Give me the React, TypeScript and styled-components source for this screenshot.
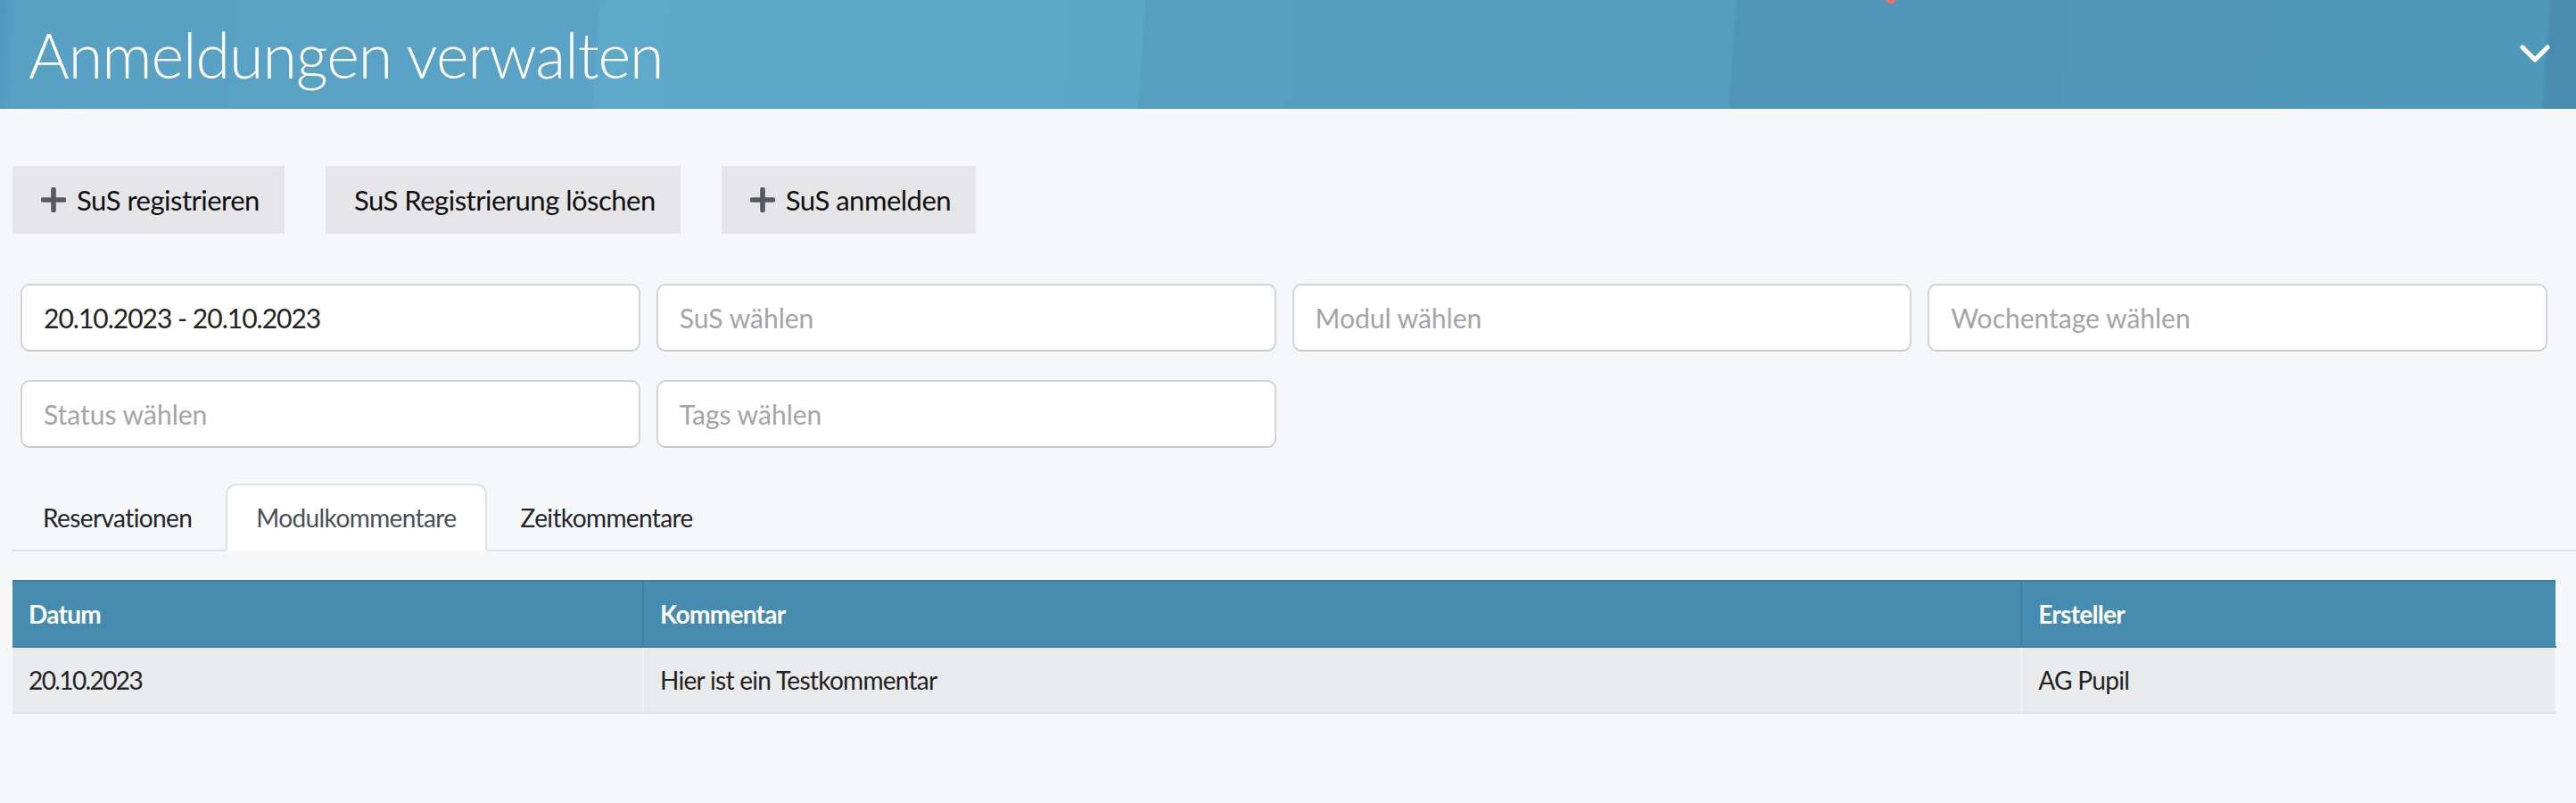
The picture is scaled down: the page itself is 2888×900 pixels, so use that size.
import React, { useState } from "react";
import styled, { createGlobalStyle } from "styled-components";

const GlobalStyle = createGlobalStyle`
  html {
    zoom: 2;
  }
  body {
    margin: 0;
    background: #f6f7f9;
    font-family: Lato, "Noto Sans", sans-serif;
    color: #212529;
  }
  * {
    box-sizing: border-box;
  }
`;

const StyledHeader = styled.header`
  position: relative;
  height: 61px;
  display: flex;
  align-items: center;
  justify-content: space-between;
  padding: 0 14px 0 16px;
  background-color: #58a1c4;
  background-image: linear-gradient(
    94deg,
    #4f98bd 0,
    #58a1c5 10px,
    #5aa3c6 335px,
    #5ea9cb 336px,
    #5ca7c9 640px,
    #569fc3 641px,
    #559dc1 970px,
    #4f95b8 972px,
    #5098bb 1425px,
    #4a8db1 1427px
  );
  overflow: hidden;
`;

const StyledTitle = styled.h1`
  margin: 0;
  color: white;
  font-family: Lato, "Noto Sans", sans-serif;
  font-weight: 300;
  font-size: 35px;
  letter-spacing: -0.5px;
`;

const StyledDot = styled.span`
  position: absolute;
  top: -6px;
  left: 1056px;
  width: 8px;
  height: 8px;
  border-radius: 50%;
  background: #e0707a;
`;

const StyledToggle = styled.button`
  display: flex;
  align-items: center;
  padding: 0;
  border: none;
  background: none;
  cursor: pointer;
`;

const StyledMain = styled.main`
  padding: 0 11px 40px 7px;
`;

const StyledButtonRow = styled.div`
  display: flex;
  gap: 23px;
  margin-top: 32px;
`;

const StyledButton = styled.button`
  display: flex;
  align-items: center;
  gap: 6px;
  height: 38px;
  padding: 0 14px 0 16px;
  border: none;
  background: #e6e6e8;
  color: #111;
  font-family: Lato, "Noto Sans", sans-serif;
  font-size: 15.5px;
  letter-spacing: -0.25px;
  cursor: pointer;
`;

const StyledFilters = styled.div`
  display: grid;
  grid-template-columns: repeat(4, 1fr);
  column-gap: 9px;
  row-gap: 16px;
  margin-top: 28px;
  padding: 0 5px 0 4.5px;
`;

const StyledInput = styled.input`
  height: 38px;
  width: 100%;
  padding: 0 12px;
  border: 1px solid #d0d4d9;
  border-bottom-color: #c6cacf;
  border-radius: 5px;
  background: white;
  font-family: Lato, "Noto Sans", sans-serif;
  font-size: 15px;
  letter-spacing: -0.5px;
  color: #222;
  outline: none;

  &::placeholder {
    color: #a4a4a6;
    letter-spacing: 0;
  }
`;

const StyledTabs = styled.div`
  display: flex;
  margin: 20px -11px 0 0;
  border-bottom: 1px solid #dee2e6;
`;

const StyledTab = styled.button<{ $active: boolean }>`
  margin: 0 2px -1px 0;
  padding: 8px 16px;
  border: 1px solid ${(p) => (p.$active ? "#dee2e6" : "transparent")};
  border-bottom-color: ${(p) => (p.$active ? "white" : "transparent")};
  border-radius: 6px 6px 0 0;
  background: ${(p) => (p.$active ? "white" : "transparent")};
  color: ${(p) => (p.$active ? "#495057" : "#212529")};
  font-family: Lato, "Noto Sans", sans-serif;
  font-size: 14px;
  letter-spacing: -0.3px;
  line-height: 20px;
  cursor: pointer;
`;

const StyledTable = styled.table`
  width: 100%;
  margin-top: 16px;
  border-collapse: collapse;
  font-size: 14px;
  letter-spacing: -0.35px;
`;

const StyledHeadCell = styled.th`
  height: 37px;
  padding: 0 9px;
  text-align: left;
  font-weight: 700;
  color: white;
  background: #468bb0;
  border-top: 1px solid #3f7fa2;
  border-left: 1px solid #3f7fa2;
  border-bottom: 1px solid #3f7fa2;

  &:first-child {
    border-left: none;
  }
`;

const StyledCell = styled.td<{ $numeric?: boolean }>`
  height: 37px;
  padding: 0 9px;
  background: #e9eaec;
  color: #222;
  letter-spacing: ${(p) => (p.$numeric ? "-0.8px" : "-0.35px")};
  border-left: 1px solid #f4f4f5;
  border-bottom: 1px solid #dfe1e4;

  &:first-child {
    border-left: none;
  }
  &:last-child {
    border-right: 1px solid #f4f4f5;
  }
`;

const PlusIcon = () => (
  <svg width="14" height="14" viewBox="0 0 14 14">
    <path d="M7 1.2v11.6M1.2 7h11.6" stroke="#555a62" strokeWidth="2.8" strokeLinecap="round" />
  </svg>
);

const ChevronIcon = () => (
  <svg width="18" height="12" viewBox="0 0 18 12">
    <path d="M2 2l7 7 7-7" fill="none" stroke="white" strokeWidth="2.6" strokeLinecap="round" strokeLinejoin="round" />
  </svg>
);

const tabs = ["Reservationen", "Modulkommentare", "Zeitkommentare"];

const comments = [
  { date: "20.10.2023", text: "Hier ist ein Testkommentar", author: "AG Pupil" },
];

const App: React.FC = () => {
  const [activeTab, setActiveTab] = useState("Modulkommentare");

  return (
    <>
      <GlobalStyle />
      <StyledHeader>
        <StyledDot />
        <StyledTitle>Anmeldungen verwalten</StyledTitle>
        <StyledToggle aria-label="Einklappen">
          <ChevronIcon />
        </StyledToggle>
      </StyledHeader>
      <StyledMain>
        <StyledButtonRow>
          <StyledButton>
            <PlusIcon />
            SuS registrieren
          </StyledButton>
          <StyledButton>SuS Registrierung löschen</StyledButton>
          <StyledButton>
            <PlusIcon />
            SuS anmelden
          </StyledButton>
        </StyledButtonRow>

        <StyledFilters>
          <StyledInput defaultValue="20.10.2023 - 20.10.2023" />
          <StyledInput placeholder="SuS wählen" />
          <StyledInput placeholder="Modul wählen" />
          <StyledInput placeholder="Wochentage wählen" />
          <StyledInput placeholder="Status wählen" />
          <StyledInput placeholder="Tags wählen" />
        </StyledFilters>

        <StyledTabs>
          {tabs.map((t) => (
            <StyledTab key={t} $active={t === activeTab} onClick={() => setActiveTab(t)}>
              {t}
            </StyledTab>
          ))}
        </StyledTabs>

        <StyledTable>
          <colgroup>
            <col style={{ width: "24.8%" }} />
            <col style={{ width: "54.2%" }} />
            <col />
          </colgroup>
          <thead>
            <tr>
              <StyledHeadCell>Datum</StyledHeadCell>
              <StyledHeadCell>Kommentar</StyledHeadCell>
              <StyledHeadCell>Ersteller</StyledHeadCell>
            </tr>
          </thead>
          <tbody>
            {comments.map((c) => (
              <tr key={c.date + c.text}>
                <StyledCell $numeric>{c.date}</StyledCell>
                <StyledCell>{c.text}</StyledCell>
                <StyledCell>{c.author}</StyledCell>
              </tr>
            ))}
          </tbody>
        </StyledTable>
      </StyledMain>
    </>
  );
};

export default App;
